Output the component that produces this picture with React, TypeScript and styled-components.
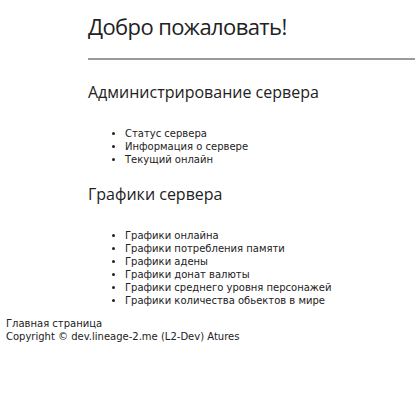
import React from "react";
import styled, { createGlobalStyle } from "styled-components";

const Global = createGlobalStyle`
  html, body { margin: 0; padding: 0; background: #fff; }
  body { color: #222; }
`;

const Page = styled.div`
  padding: 0 0 0 6px;
`;

const Main = styled.main`
  margin-left: 82px;
`;

const Title = styled.h1`
  font-family: "Open Sans", "Noto Sans", sans-serif;
  font-weight: 400;
  font-size: 22px;
  letter-spacing: -0.6px;
  line-height: 30px;
  margin: 0;
  padding-top: 11px;
  color: #222;
`;

const Rule = styled.hr`
  border: 0;
  height: 2px;
  background: #9a9a9a;
  margin: 17px 0 0 0;
`;

const Section = styled.section<{ $first?: boolean }>`
  margin-top: ${(p) => (p.$first ? "21px" : "17px")};
`;

const SectionTitle = styled.h2`
  font-family: "Open Sans", "Noto Sans", sans-serif;
  font-weight: 400;
  font-size: 16px;
  line-height: 22px;
  margin: 0;
  color: #222;
`;

const List = styled.ul`
  margin: 24px 0 0 0;
  padding-left: 37px;
  font-family: "DejaVu Sans", sans-serif;
  font-size: 10px;
  line-height: 13px;
  color: #222;
  li { margin: 0; }
`;

const Footer = styled.footer`
  margin-top: 10px;
  font-family: "DejaVu Sans", sans-serif;
  font-size: 10px;
  line-height: 13px;
  color: #222;
`;

export default function App() {
  return (
    <Page>
      <Global />
      <Main>
        <Title>Добро пожаловать!</Title>
        <Rule />
        <Section $first>
          <SectionTitle>Администрирование сервера</SectionTitle>
          <List>
            <li>Статус сервера</li>
            <li>Информация о сервере</li>
            <li>Текущий онлайн</li>
          </List>
        </Section>
        <Section>
          <SectionTitle>Графики сервера</SectionTitle>
          <List>
            <li>Графики онлайна</li>
            <li>Графики потребления памяти</li>
            <li>Графики адены</li>
            <li>Графики донат валюты</li>
            <li>Графики среднего уровня персонажей</li>
            <li>Графики количества обьектов в мире</li>
          </List>
        </Section>
      </Main>
      <Footer>
        <div>Главная страница</div>
        <div>Copyright © dev.lineage-2.me (L2-Dev) Atures</div>
      </Footer>
    </Page>
  );
}
